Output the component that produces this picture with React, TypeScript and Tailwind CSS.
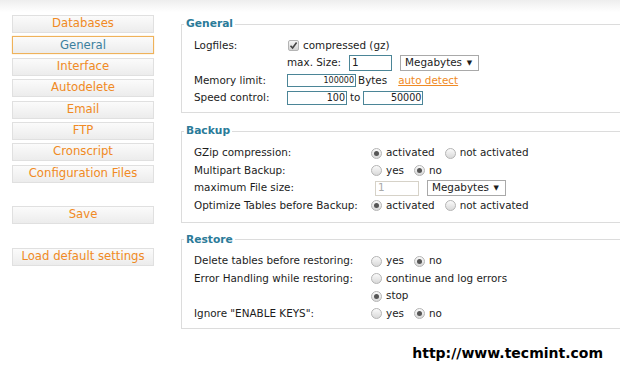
import React from 'react';

const ORANGE = 'text-[#f08a24]';

const navItems = [
  'Databases',
  'General',
  'Interface',
  'Autodelete',
  'Email',
  'FTP',
  'Cronscript',
  'Configuration Files',
];

function NavButton({ label, active = false }: { label: string; active?: boolean }) {
  return (
    <div
      className={
        'h-[18px] w-[142px] flex items-center justify-center text-[11.7px] leading-none border bg-gradient-to-b from-[#fbfbfb] to-[#ececec] ' +
        (active ? 'border-[#efb25a] text-[#3b7f9e] shadow-[0_0_1px_#f3c98a]' : 'border-[#e0e0e0] ' + ORANGE)
      }
    >
      {label}
    </div>
  );
}

function Radio({ checked = false }: { checked?: boolean }) {
  return (
    <span className="w-[11px] h-[11px] shrink-0 rounded-full border border-[#b4b4b4] bg-gradient-to-b from-[#fafafa] to-[#d9d9d9] flex items-center justify-center">
      {checked && <span className="w-[5px] h-[5px] rounded-full bg-[#555]" />}
    </span>
  );
}

function Option({ label, checked = false }: { label: string; checked?: boolean }) {
  return (
    <span className="flex items-center gap-[4px] mr-[10px]">
      <Radio checked={checked} />
      <span>{label}</span>
    </span>
  );
}

function Select({ w }: { w: string }) {
  return (
    <span className={`${w} h-[16px] border border-[#a9a9a9] bg-white flex items-center justify-between pl-[4px] pr-[6px] text-[10.4px]`}>
      <span>Megabytes</span>
      <span className="text-[7px]">▼</span>
    </span>
  );
}

function Legend({ children }: { children: React.ReactNode }) {
  return (
    <legend className="px-[2px] text-[10.7px] leading-[14px] font-bold text-[#2b7b99]">{children}</legend>
  );
}

function Row({ label, w, children }: { label?: string; w: string; children?: React.ReactNode }) {
  return (
    <div className="h-[17.5px] flex items-center">
      <span className={`${w} shrink-0`}>{label}</span>
      <div className="flex items-center">{children}</div>
    </div>
  );
}

export default function App() {
  return (
    <div className="w-[620px] h-[371px] overflow-hidden flex bg-[linear-gradient(to_bottom,#eeeeee,#ffffff_12px)] text-[#1c1c1c] font-['DejaVu_Sans',sans-serif]">
      {/* ── Left menu ── */}
      <nav className="w-[181px] shrink-0 pl-[12px] pt-[15px] flex flex-col">
        <div className="flex flex-col gap-[3.4px]">
          {navItems.map((n) => (
            <NavButton key={n} label={n} active={n === 'General'} />
          ))}
        </div>
        <div className="mt-[23px]">
          <NavButton label="Save" />
        </div>
        <div className="mt-[24px]">
          <NavButton label="Load default settings" />
        </div>
      </nav>

      {/* ── Settings ── */}
      <main className="w-[439px] overflow-hidden pt-[17px] text-[10.4px]">
        <fieldset className="w-[460px] border border-[#dcdcdc] pl-[2px]">
          <Legend>General</Legend>
          <div className="pl-[10px] pt-[6px] pb-[5px]">
            <Row label="Logfiles:" w="w-[93px]">
              <span className="ml-[1px] w-[11px] h-[11px] rounded-[2px] border border-[#b4b4b4] bg-gradient-to-b from-[#f5f5f5] to-[#d4d4d4] flex items-center justify-center">
                <svg width="9" height="9" viewBox="0 0 9 9">
                  <path d="M1.5 4.8 L3.6 7 L7.6 1.6" fill="none" stroke="#444" strokeWidth="1.6" />
                </svg>
              </span>
              <span className="ml-[4px]">compressed (gz)</span>
            </Row>
            <Row w="w-[93px]">
              <span>max. Size:</span>
              <span className="ml-[8px] w-[43px] h-[16px] border border-[#4b8597] bg-white flex items-center pl-[2px]">1</span>
              <span className="ml-[8px]">
                <Select w="w-[79px]" />
              </span>
            </Row>
            <Row label="Memory limit:" w="w-[93px]">
              <span className="w-[69px] h-[13px] border border-[#4b8597] bg-white flex items-center justify-end text-[8px] pr-[1px]">100000</span>
              <span className="ml-[2px]">Bytes</span>
              <span className={`ml-[11px] underline ${ORANGE}`}>auto detect</span>
            </Row>
            <Row label="Speed control:" w="w-[93px]">
              <span className="w-[60px] h-[14px] border border-[#4b8597] bg-white flex items-center justify-end text-[9.6px] pr-[1px]">100</span>
              <span className="ml-[3px]">to</span>
              <span className="ml-[3px] w-[60px] h-[14px] border border-[#4b8597] bg-white flex items-center justify-end text-[9.6px] pr-[1px]">50000</span>
            </Row>
          </div>
        </fieldset>

        <fieldset className="mt-[11px] w-[460px] border border-[#dcdcdc] pl-[2px]">
          <Legend>Backup</Legend>
          <div className="pl-[10px] pt-[6.5px] pb-[7px]">
            <Row label="GZip compression:" w="w-[177px]">
              <Option label="activated" checked />
              <Option label="not activated" />
            </Row>
            <Row label="Multipart Backup:" w="w-[177px]">
              <Option label="yes" />
              <Option label="no" checked />
            </Row>
            <Row label="maximum File size:" w="w-[177px]">
              <span className="ml-[4px] w-[44px] h-[15px] border border-[#d6d2c8] bg-white flex items-center pl-[2px] text-[#aaa]">1</span>
              <span className="ml-[8px]">
                <Select w="w-[79px]" />
              </span>
            </Row>
            <Row label="Optimize Tables before Backup:" w="w-[177px]">
              <Option label="activated" checked />
              <Option label="not activated" />
            </Row>
          </div>
        </fieldset>

        <fieldset className="mt-[10px] w-[460px] border border-[#dcdcdc] pl-[2px]">
          <Legend>Restore</Legend>
          <div className="pl-[10px] pt-[6px] pb-[5px]">
            <Row label="Delete tables before restoring:" w="w-[177px]">
              <Option label="yes" />
              <Option label="no" checked />
            </Row>
            <Row label="Error Handling while restoring:" w="w-[177px]">
              <Option label="continue and log errors" />
            </Row>
            <Row w="w-[177px]">
              <Option label="stop" checked />
            </Row>
            <Row label={'Ignore "ENABLE KEYS":'} w="w-[177px]">
              <Option label="yes" />
              <Option label="no" checked />
            </Row>
          </div>
        </fieldset>

        <div className="mt-[16px] pr-[17px] text-right text-[14px] leading-[17px] font-bold text-black">
          http://www.tecmint.com
        </div>
      </main>
    </div>
  );
}
